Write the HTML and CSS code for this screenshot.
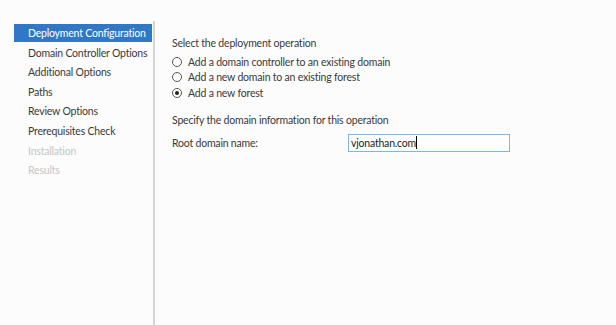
FILE: index.html
```html
<!DOCTYPE html>
<html>
<head>
<meta charset="utf-8">
<link rel="stylesheet" href="styles.css">
</head>
<body>
<div class="page">
  <div class="title">Deployment Configuration</div>
  <div class="main">
    <nav class="nav">
      <div class="nav-item active">Deployment Configuration</div>
      <div class="nav-item">Domain Controller Options</div>
      <div class="nav-item">Additional Options</div>
      <div class="nav-item">Paths</div>
      <div class="nav-item">Review Options</div>
      <div class="nav-item">Prerequisites Check</div>
      <div class="nav-item disabled">Installation</div>
      <div class="nav-item disabled">Results</div>
    </nav>
    <div class="divider"></div>
    <section class="content">
      <div class="heading">Select the deployment operation</div>
      <div class="radios">
        <label class="radio"><span class="dot"></span>Add a domain controller to an existing domain</label>
        <label class="radio"><span class="dot"></span>Add a new domain to an existing forest</label>
        <label class="radio"><span class="dot checked"></span>Add a new forest</label>
      </div>
      <div class="heading second">Specify the domain information for this operation</div>
      <div class="field">
        <span class="field-label">Root domain name:</span>
        <div class="input">vjonathan.com<span class="caret"></span></div>
      </div>
    </section>
  </div>
</div>
</body>
</html>
```
FILE: styles.css
```css
html, body {
  margin: 0;
  padding: 0;
  background: #fcfcfc;
}
body {
  font-family: Lato, "Open Sans", sans-serif;
  font-size: 10.5px;
  letter-spacing: -0.2px;
  color: #3a3a3a;
  width: 616px;
  height: 325px;
  overflow: hidden;
}
.page {
  display: flex;
  flex-direction: column;
}
.title {
  font-family: "Open Sans", sans-serif;
  font-size: 18px;
  letter-spacing: -0.5px;
  color: #2a6fbf;
  height: 20px;
  line-height: 20px;
  margin-top: -21px;
  padding-left: 14px;
  white-space: nowrap;
}
.main {
  display: flex;
  height: 305px;
  margin-top: 21px;
}
.nav {
  width: 138px;
  margin-left: 14px;
  padding-top: 4px;
  display: flex;
  flex-direction: column;
}
.nav-item {
  height: 19.6px;
  line-height: 18px;
  padding-left: 14px;
  white-space: nowrap;
  color: #3a3a3a;
}
.nav-item.active {
  background: #3078c6;
  color: #ffffff;
  height: 18px;
  margin-bottom: 1.6px;
}
.nav-item.disabled {
  color: #c6c6c6;
}
.divider {
  width: 2px;
  background: #d4d4d4;
  margin-left: 1px;
  margin-top: 1px;
}
.content {
  padding-left: 17px;
  padding-top: 15px;
  flex: 1;
}
.heading {
  height: 16px;
  line-height: 16px;
}
.heading.second {
  margin-top: 11px;
}
.radios {
  display: flex;
  flex-direction: column;
  margin-top: 3px;
}
.radio {
  display: flex;
  align-items: center;
  height: 15.5px;
  gap: 6px;
}
.dot {
  width: 8px;
  height: 8px;
  border: 1px solid #555;
  border-radius: 50%;
  background: #fff;
  position: relative;
  box-sizing: content-box;
}
.dot.checked::after {
  content: "";
  position: absolute;
  left: 2px;
  top: 2px;
  width: 4px;
  height: 4px;
  border-radius: 50%;
  background: #222;
}
.field {
  display: flex;
  align-items: center;
  margin-top: 6px;
}
.field-label {
  width: 176px;
}
.input {
  width: 158px;
  height: 16px;
  line-height: 16px;
  border: 1px solid #7fb6ea;
  background: #fff;
  padding-left: 2px;
  color: #222;
  display: flex;
  align-items: center;
}
.caret {
  width: 1px;
  height: 13px;
  background: #000;
}
```
